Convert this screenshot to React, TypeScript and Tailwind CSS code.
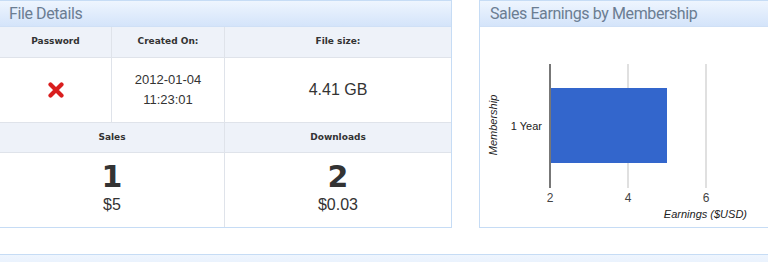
import React from "react";

const headerCls =
  "h-[26px] bg-gradient-to-b from-[#eef5fe] to-[#d4e4fa] border-b border-[#cfe0f6] flex items-center text-[16px] text-[#6b7d92] tracking-[-0.4px]";

function RedX() {
  return (
    <svg width="16" height="16" viewBox="0 0 16 16">
      <path d="M2.5 2.5 L13.5 13.5 M13.5 2.5 L2.5 13.5" stroke="#d91e1e" strokeWidth="4.2" strokeLinecap="round" />
    </svg>
  );
}

function Chart() {
  const x2 = 70;
  const x4 = 148;
  const x6 = 226;
  return (
    <svg width="290" height="198" viewBox="0 0 290 198" style={{ fontFamily: "'Liberation Sans', Arial, sans-serif" }}>
      <rect x={x4 - 1} y={37} width={2} height={124} fill="#e0e0e0" />
      <rect x={x6 - 1} y={37} width={2} height={124} fill="#e0e0e0" />
      <rect x={71} y={61} width={116} height={75} fill="#3366cc" />
      <rect x={x2 - 1} y={37} width={2} height={124} fill="#777777" />
      <text x={x2} y={175} fontSize="12" fill="#444" textAnchor="middle">2</text>
      <text x={x4} y={175} fontSize="12" fill="#444" textAnchor="middle">4</text>
      <text x={x6} y={175} fontSize="12" fill="#444" textAnchor="middle">6</text>
      <text x={267} y={191} fontSize="11" fill="#222" textAnchor="end" fontStyle="italic">Earnings ($USD)</text>
      <text x={62} y={103} fontSize="11" fill="#222" textAnchor="end">1 Year</text>
      <text transform="translate(17,98) rotate(-90)" fontSize="11" fill="#222" textAnchor="middle" fontStyle="italic">Membership</text>
    </svg>
  );
}

export default function App() {
  const th = "flex items-center justify-center bg-[#eef2f9] text-[9px] font-bold text-[#333] font-['DejaVu_Sans',sans-serif]";
  return (
    <div className="w-[768px] h-[262px] bg-white overflow-hidden font-['Liberation_Sans',Arial,sans-serif]">
      <div className="flex items-start">
        {/* Left panel */}
        <div className="w-[453px] -ml-px shrink-0 border border-[#c6dcf5]">
          <div className={headerCls + " pl-[9px] font-['Roboto',sans-serif]"}>File Details</div>
          <div className="grid grid-cols-[112px_113px_1fr]">
            <div className={th + " h-[31px] border-b border-r border-[#dfe3ea]"}>Password</div>
            <div className={th + " h-[31px] border-b border-r border-[#dfe3ea]"}>Created On:</div>
            <div className={th + " h-[31px] border-b border-[#dfe3ea]"}>File size:</div>

            <div className="h-[65px] border-b border-r border-[#dfe3ea] flex items-center justify-center">
              <RedX />
            </div>
            <div className="h-[65px] border-b border-r border-[#dfe3ea] flex flex-col items-center justify-center text-[13px] leading-[20px] text-[#333]">
              <div>2012-01-04</div>
              <div>11:23:01</div>
            </div>
            <div className="h-[65px] border-b border-[#dfe3ea] flex items-center justify-center text-[16px] text-[#333]">
              4.41 GB
            </div>
          </div>
          <div className="grid grid-cols-[225px_1fr]">
            <div className={th + " h-[30px] border-b border-r border-[#dfe3ea]"}>Sales</div>
            <div className={th + " h-[30px] border-b border-[#dfe3ea]"}>Downloads</div>
            <div className="h-[74px] border-r border-[#dfe3ea] flex flex-col items-center pt-[9px] text-[#333]">
              <div className="text-[30px] leading-[30px] font-bold font-['DejaVu_Sans',sans-serif]">1</div>
              <div className="text-[16px] leading-[20px] mt-[3px]">$5</div>
            </div>
            <div className="h-[74px] flex flex-col items-center pt-[9px] text-[#333]">
              <div className="text-[30px] leading-[30px] font-bold font-['DejaVu_Sans',sans-serif]">2</div>
              <div className="text-[16px] leading-[20px] mt-[3px]">$0.03</div>
            </div>
          </div>
        </div>

        {/* Right panel */}
        <div className="ml-[27px] w-[300px] shrink-0 border border-[#c6dcf5]">
          <div className={headerCls + " pl-[10px] font-['Roboto',sans-serif]"}>Sales Earnings by Membership</div>
          <div className="h-[200px]">
            <Chart />
          </div>
        </div>
      </div>

      <div className="mt-[26px] -ml-px w-[800px] h-[20px] border-t border-[#c6dcf5] bg-gradient-to-b from-[#eef5fe] to-[#e4eefc]" />
    </div>
  );
}
